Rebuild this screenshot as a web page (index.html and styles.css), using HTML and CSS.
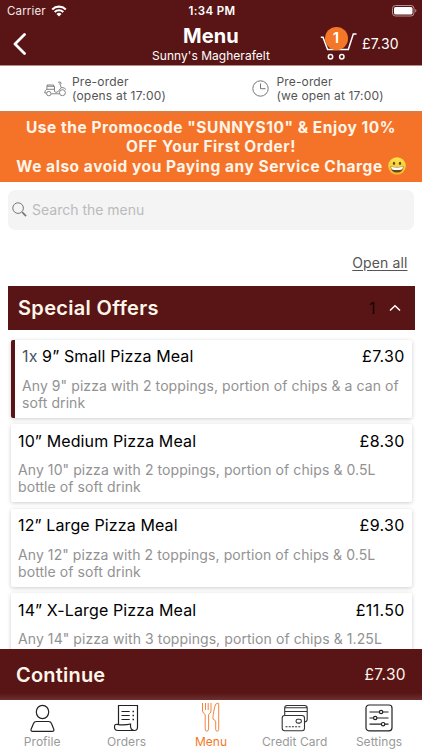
FILE: index.html
```html
<!DOCTYPE html>
<html lang="en">
<head>
<meta charset="utf-8">
<title>Menu</title>
<link rel="stylesheet" href="styles.css">
</head>
<body>
<div class="app">
  <header class="header">
    <div class="status">
      <div class="carrier"><span>Carrier</span>
        <svg width="16" height="12" viewBox="0 0 16 12" fill="none" stroke="#fff" stroke-width="2.1"><path d="M1.2 4.4a9.8 9.8 0 0 1 13.6 0M3.7 7a6.2 6.2 0 0 1 8.6 0"/><path d="M8 11.5L5.5 9a3.5 3.5 0 0 1 5 0z" fill="#fff" stroke="none"/></svg>
      </div>
      <div class="clock">1:34 PM</div>
      <svg class="battery" width="25" height="12" viewBox="0 0 25 12"><rect x=".5" y=".5" width="21.5" height="10.5" rx="3" fill="none" stroke="#b58f8f"/><rect x="2" y="2" width="18.5" height="7.5" rx="1.6" fill="#fff"/><path d="M23.2 4v3.6q1.2-.5 1.2-1.8T23.2 4z" fill="#b58f8f"/></svg>
    </div>
    <div class="nav">
      <svg class="back" width="14" height="22" viewBox="0 0 14 22" fill="none" stroke="#fff" stroke-width="2.8" stroke-linecap="round" stroke-linejoin="round"><path d="M11.500 1.500L2 11l9.500 9.500"/></svg>
      <div class="titles">
        <h1>Menu</h1>
        <p>Sunny's Magherafelt</p>
      </div>
      <div class="basket">
        <svg width="37" height="36" viewBox="0 0 37 36" fill="none" stroke="#fff" stroke-width="1.5"><path d="M.8 12.300h2.200L7.600 24.400h20.700L33.300 9h3.200"/><circle cx="10.500" cy="31.700" r="2.200"/><circle cx="21.800" cy="31.700" r="2.200"/></svg>
        <span class="badge">1</span>
        <span class="total">£7.30</span>
      </div>
    </div>
  </header>

  <section class="times">
    <div class="time delivery">
      <svg width="23" height="16" viewBox="0 0 23 16" fill="none" stroke="#777" stroke-width=".9"><path d="M3 5.300h7.500v3H2.800zM2.800 8.300Q.8 9.300.7 12h2M10.500 6.300v2q-.7 3 1.500 3.100 2.400 0 4-3.300L17.300 7 15.700 2.200M14 1.300l2.400-.3.900 2.100M17.500 6.600q3-.3 4.500 1.900M7.200 12.800h8.100M3 5.300V4h6.500v1.300"/><circle cx="4.800" cy="12.600" r="2.200"/><circle cx="18.400" cy="11.700" r="3"/></svg>
      <p>Pre-order<br>(opens at 17:00)</p>
    </div>
    <div class="time collection">
      <svg width="17" height="17" viewBox="0 0 17 17" fill="none" stroke="#777" stroke-width="1"><circle cx="8.500" cy="8.500" r="7.700"/><path d="M8.500 3.500v5.200h5"/></svg>
      <p>Pre-order<br>(we open at 17:00)</p>
    </div>
  </section>

  <section class="promo">
    <p>Use the Promocode "SUNNYS10" &amp; Enjoy 10%</p>
    <p>OFF Your First Order!</p>
    <p class="promo-last"><span>We also avoid you Paying any Service Charge</span>
      <svg width="18" height="18" viewBox="0 0 18 18"><defs><linearGradient id="face" x1="0" y1="0" x2="0" y2="1"><stop offset="0" stop-color="#ffe64b"/><stop offset="1" stop-color="#efb52c"/></linearGradient></defs><circle cx="9" cy="9" r="8.800" fill="url(#face)"/><ellipse cx="6" cy="6.300" rx="1.100" ry="1.600" fill="#63411a"/><ellipse cx="12" cy="6.300" rx="1.100" ry="1.600" fill="#63411a"/><path d="M2.500 9.500q6.500 1.300 13 0-.5 6-6.500 6t-6.500-6z" fill="#6d4420"/><path d="M3 9.800q6 1.200 12 0-.2 2.200-1 2.600-5 1-10 0-.8-.5-1-2.600z" fill="#fff"/></svg>
    </p>
  </section>

  <main class="menu">
    <div class="search">
      <svg width="15" height="15" viewBox="0 0 15 15" fill="none" stroke="#777" stroke-width="1"><circle cx="6.100" cy="6.100" r="5.300"/><path d="M9.900 9.900l1.200 1.200"/><path d="M10.600 10.600l3.500 3.500" stroke-width="1.600"/></svg>
      <span>Search the menu</span>
    </div>
    <div class="open"><a>Open all</a></div>
    <div class="category">
      <h2>Special Offers</h2>
      <span class="count">1</span>
      <svg width="12" height="8" viewBox="0 0 12 8" fill="none" stroke="#fff" stroke-width="1.500"><path d="M1 6.500L6 1.700l5 4.800"/></svg>
    </div>
    <div class="items">
      <article class="item selected">
        <div class="row"><h3><span class="qty">1x</span> 9” Small Pizza Meal</h3><span class="price">£7.30</span></div>
        <p>Any 9" pizza with 2 toppings, portion of chips &amp; a can of<br>soft drink</p>
      </article>
      <article class="item">
        <div class="row"><h3>10” Medium Pizza Meal</h3><span class="price">£8.30</span></div>
        <p>Any 10" pizza with 2 toppings, portion of chips &amp; 0.5L<br>bottle of soft drink</p>
      </article>
      <article class="item">
        <div class="row"><h3>12” Large Pizza Meal</h3><span class="price">£9.30</span></div>
        <p>Any 12" pizza with 2 toppings, portion of chips &amp; 0.5L<br>bottle of soft drink</p>
      </article>
      <article class="item">
        <div class="row"><h3>14” X-Large Pizza Meal</h3><span class="price">£11.50</span></div>
        <p>Any 14" pizza with 3 toppings, portion of chips &amp; 1.25L</p>
      </article>
    </div>
  </main>

  <div class="continue"><strong>Continue</strong><span>£7.30</span></div>

  <nav class="tabs">
    <div class="tab">
      <svg width="28" height="28" viewBox="0 0 28 28" fill="none" stroke="#222" stroke-width="1.200"><ellipse cx="14.500" cy="8" rx="6.200" ry="6.700"/><path d="M8.500 17.500h12q2.300 0 3 2l2.300 5.700q.6 2.100-1.700 2.100H4.700q-2.200 0-1.600-2.100L5.500 19.500q.7-2 3-2z"/></svg>
      <span>Profile</span>
    </div>
    <div class="tab">
      <svg width="28" height="28" viewBox="0 0 28 28" fill="none" stroke="#222" stroke-width="1.200"><path d="M5.500 20V1.500h19V23q0 3.500-3 3.500H5q-3.300 0-3.500-3.300Q1.300 20 4 20.300q7 1.200 13.500-.3-.5 6.500 4 6.500"/><path d="M8.500 7.500h8.200M8.500 11.500h8.200M8.500 15.500h8.200"/><path d="M19.500 7.500h1.500M19.500 11.500h1.500M19.500 15.500h1.500" stroke-width="1.500"/></svg>
      <span>Orders</span>
    </div>
    <div class="tab active">
      <svg width="22" height="30" viewBox="0 0 22 30" fill="none" stroke="#f47728" stroke-width=".9"><path d="M2.500 1v8q.2 2 2.700 3.500V27q.2 2.200 1.700 2.200T8.600 27V12.500q2.200-1.500 2.400-3.500V1M5.500 1v7M8.200 1v7"/><path d="M17.900 1q-2.400 0-3.200 4-2 9-1.700 12l2.700 2v8.500q.2 1.700 1.500 1.700t1.500-1.700V1.500z"/></svg>
      <span>Menu</span>
    </div>
    <div class="tab">
      <svg width="28" height="28" viewBox="0 0 28 28" fill="none" stroke="#333" stroke-width="1.100"><rect x="1.200" y="11.500" width="22.300" height="15.300" rx="2.500"/><path d="M3.700 11.500V4q0-2.500 2.500-2.500h17.500q2.500 0 2.500 2.500v11.500q0 2-2.700 2.500M3.700 3.800h22.500M3.700 7.500h22.500"/><rect x="15" y="15.300" width="5.400" height="3.800" rx="1.900"/><path d="M4.500 22.700h16" stroke-dasharray="2 1.200"/></svg>
      <span>Credit Card</span>
    </div>
    <div class="tab">
      <svg width="28" height="28" viewBox="0 0 28 28" fill="none" stroke="#222" stroke-width="1.200"><rect x="1" y="1" width="26" height="25.800" rx="3"/><path d="M4.500 8h9.700M18 8h5.500M4.500 14h3.800M12 14h11.500M4.500 20.200h11.700M20 20.200h3.500"/><circle cx="16.100" cy="8" r="1.700"/><circle cx="10.200" cy="14" r="1.700"/><circle cx="18.100" cy="20.200" r="1.700"/></svg>
      <span>Settings</span>
    </div>
  </nav>
</div>
</body>
</html>
```

FILE: styles.css
```css
* { box-sizing: border-box; }
body, h1, h2, h3, p { margin: 0; }
body {
  width: 422px;
  height: 750px;
  overflow: hidden;
  background: #fff;
  font-family: Inter, "Liberation Sans", sans-serif;
  font-feature-settings: "calt" 0;
  color: #000;
}
svg { display: block; flex: none; }
.app { display: flex; flex-direction: column; height: 750px; white-space: nowrap; }

.header { height: 66px; flex: none; background: #591515; border-bottom: 1px solid #b88a8a; color: #fff; }
.status { height: 22px; display: grid; grid-template-columns: 1fr auto 1fr; align-items: center; padding: 0 5px 0 7px; font-size: 11.500px; }
.carrier { display: flex; align-items: center; gap: 5px; letter-spacing: .15px; color: #f4e9e9; }
.clock { font-weight: 600; letter-spacing: .35px; }
.battery { justify-self: end; margin-bottom: 1px; }
.nav { height: 43px; display: grid; grid-template-columns: 110px 202px 110px; align-items: center; }
.back { margin: 0 0 0 13px; }
.titles { text-align: center; }
.titles h1 { font-size: 20px; line-height: 24px; font-weight: 700; letter-spacing: .1px; }
.titles p { font-size: 12px; line-height: 15px; letter-spacing: .03px; }
.basket { position: relative; display: flex; align-items: center; gap: 5px; margin-left: 8px; }
.basket svg { margin-top: -2px; }
.total { font-size: 14px; letter-spacing: .2px; margin-top: -1px; }
.badge { position: absolute; left: 4.500px; top: 0; width: 23px; height: 23px; border-radius: 50%; background: #f47728; font-size: 15px; line-height: 22px; font-weight: 600; text-align: center; }

.times { height: 45px; flex: none; display: grid; grid-template-columns: 1fr 1fr; font-size: 12px; line-height: 14px; color: #555; }
.time { display: flex; align-items: center; letter-spacing: .2px; }
.delivery { padding-left: 44px; gap: 5px; }
.collection { padding-left: 41px; gap: 7.500px; }
.collection p { letter-spacing: .14px; }

.promo { height: 71px; flex: none; padding-top: 7px; background: linear-gradient(#d87c48, #f47328 4px); color: #fff5ea; font-size: 15.500px; font-weight: 700; line-height: 19.300px; letter-spacing: .54px; text-align: center; }
.promo-last { display: flex; justify-content: center; align-items: center; gap: 5px; }

.menu { flex: 1; min-height: 0; overflow: hidden; padding: 8px 7.500px 0; }
.search { height: 39.500px; border-radius: 7px; background: #f4f4f4; display: flex; align-items: center; gap: 5px; padding-left: 4px; margin: 0 .5px; font-size: 14px; color: #bbb; }
.open { height: 56px; display: flex; justify-content: flex-end; align-items: center; padding: 9px 7px 0 0; }
.open a { font-size: 14px; line-height: 17px; letter-spacing: .12px; color: #555; text-decoration: underline; text-underline-offset: 2px; }
.category { height: 44px; background: #591515; display: flex; align-items: center; padding: 0 14px 0 10.500px; color: #fff5ea; }
.category h2 { flex: 1; font-size: 20px; font-weight: 600; letter-spacing: .32px; }
.count { color: #170303; font-size: 16px; margin-right: 13px; }
.items { display: flex; flex-direction: column; gap: 6.500px; padding: 10px 3px 0; }
.item { height: 78px; flex: none; background: #fff; border-radius: 2px; box-shadow: 0 1px 4px rgba(0, 0, 0, .2); padding: 7.500px 7px 0 7.500px; }
.selected { border-left: 4px solid #591515; }
.row { display: flex; justify-content: space-between; align-items: center; font-size: 16px; line-height: 19px; }
.row h3 { font-size: inherit; font-weight: 400; letter-spacing: .12px; }
.price { letter-spacing: .35px; margin-right: -.3px; }
.qty { color: #475563; }
.item p { margin-top: 10.500px; font-size: 14px; line-height: 17px; letter-spacing: .08px; color: #929292; }

.continue { height: 51px; flex: none; display: flex; align-items: center; justify-content: space-between; padding: 0 16px; background: linear-gradient(#591515 44px, #6b3030 51px); color: #fff5ea; }
.continue strong { font-size: 20px; font-weight: 600; letter-spacing: .2px; }
.continue span { font-size: 15.500px; letter-spacing: .35px; }
.tabs { height: 50px; flex: none; display: grid; grid-template-columns: repeat(5, 1fr); background: #fff; }
.tab { display: flex; flex-direction: column; align-items: center; padding-top: 4px; font-size: 12px; line-height: 15px; letter-spacing: .05px; color: #999; }
.tab:nth-child(n+4) { padding-right: 1.500px; }
.tab span { margin-top: 2px; }
.active { color: #f47728; padding-top: 2px; }
```
